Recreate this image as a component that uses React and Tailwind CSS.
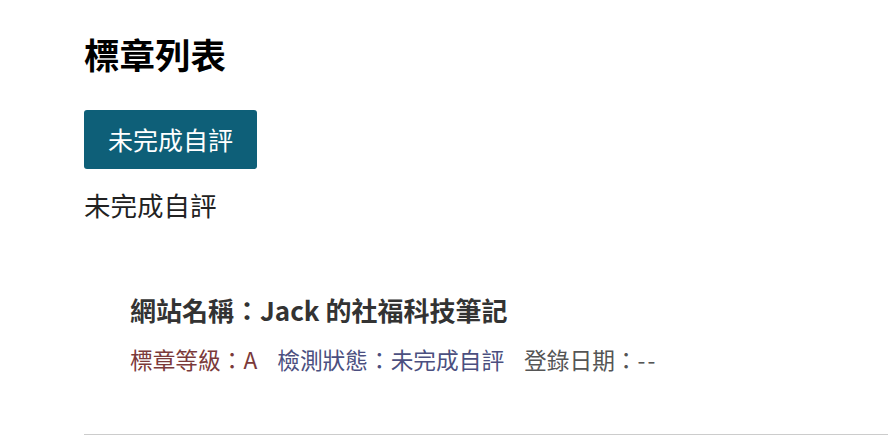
export default function App() {
  return (
    <div
      className="min-h-screen bg-white pl-[84px]"
      style={{ fontFamily: '"Noto Sans CJK TC", "Noto Sans", sans-serif' }}
    >
      <h1 className="pt-[30px] text-[35.5px] font-bold leading-[48px] text-black">標章列表</h1>
      <button className="mt-[32px] h-[59px] w-[173px] rounded-[3px] bg-[#0e5f78] text-[25px] leading-[59px] text-white">
        未完成自評
      </button>
      <p className="mt-[16px] text-[26.5px] leading-[40px] text-[#222]">未完成自評</p>
      <div className="mt-[66px] pb-[58px] pl-[46px]">
        <h2 className="text-[26px] font-bold leading-[38px] text-[#333]">網站名稱：Jack 的社福科技筆記</h2>
        <div className="mt-[15px] flex gap-[20px] text-[22.7px] leading-[32px]">
          <span className="text-[#7b3a3a]">標章等級：A</span>
          <span className="text-[#4b4f80]">檢測狀態：未完成自評</span>
          <span className="text-[#555]">登錄日期：<span className="tracking-[2px]">--</span></span>
        </div>
      </div>
      <hr className="border-t border-[#cccccc]" />
    </div>
  )
}
